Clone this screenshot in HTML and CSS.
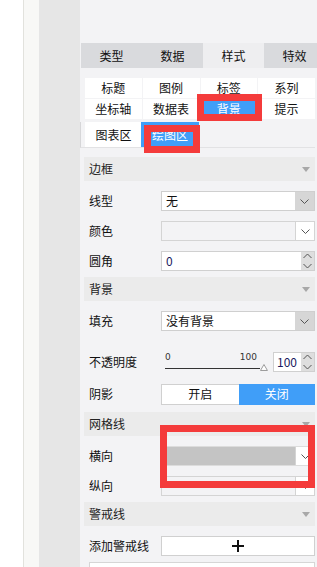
FILE: index.html
```html
<!DOCTYPE html>
<html>
<head>
<meta charset="utf-8">
<link rel="stylesheet" href="styles.css">
</head>
<body>
<div class="app">
  <div class="s-white"></div>
  <div class="s-line"></div>
  <div class="s-off"></div>
  <div class="s-gray"></div>
  <div class="panel">
    <div class="tabs">
      <div class="tab">类型</div>
      <div class="tab">数据</div>
      <div class="tab active">样式</div>
      <div class="tab">特效</div>
    </div>
    <div class="subtabs">
      <div class="st">标题</div>
      <div class="st">图例</div>
      <div class="st">标签</div>
      <div class="st">系列</div>
      <div class="st">坐标轴</div>
      <div class="st">数据表</div>
      <div class="st on">背景</div>
      <div class="st">提示</div>
    </div>
    <div class="subrow">
      <div class="st2">图表区</div>
      <div class="st2 on">绘图区</div>
    </div>

    <div class="sec-head first">边框<span class="tri"></span></div>
    <div class="sec-body">
      <div class="row">
        <div class="lbl">线型</div>
        <div class="sel">
          <div class="sel-text">无</div>
          <div class="sel-arrow"><svg width="9" height="5" viewBox="0 0 9 5"><polyline points="0.5,0.5 4.5,4.5 8.5,0.5" fill="none" stroke="#555" stroke-width="1"/></svg></div>
        </div>
      </div>
      <div class="row">
        <div class="lbl">颜色</div>
        <div class="sel empty">
          <div class="sel-text"></div>
          <div class="sel-arrow"><svg width="9" height="5" viewBox="0 0 9 5"><polyline points="0.5,0.5 4.5,4.5 8.5,0.5" fill="none" stroke="#555" stroke-width="1"/></svg></div>
        </div>
      </div>
      <div class="row">
        <div class="lbl">圆角</div>
        <div class="num wide">
          <div class="num-text">0</div>
          <div class="spin"><svg width="9" height="16" viewBox="0 0 9 16"><polyline points="0.5,5 4.5,1 8.5,5" fill="none" stroke="#555"/><polyline points="0.5,11 4.5,15 8.5,11" fill="none" stroke="#555"/></svg></div>
        </div>
      </div>
    </div>

    <div class="sec-head">背景<span class="tri"></span></div>
    <div class="sec-body">
      <div class="row">
        <div class="lbl">填充</div>
        <div class="sel">
          <div class="sel-text">没有背景</div>
          <div class="sel-arrow"><svg width="9" height="5" viewBox="0 0 9 5"><polyline points="0.5,0.5 4.5,4.5 8.5,0.5" fill="none" stroke="#555" stroke-width="1"/></svg></div>
        </div>
      </div>
      <div class="row opacity">
        <div class="lbl">不透明度</div>
        <div class="slider">
          <div class="ticks"><span>0</span><span>100</span></div>
          <div class="track-row">
            <div class="track"></div>
            <svg class="thumb" width="8" height="7" viewBox="0 0 8 7"><polygon points="4,0.5 7.5,6.5 0.5,6.5" fill="#fff" stroke="#999"/></svg>
          </div>
        </div>
        <div class="num small">
          <div class="num-text">100</div>
          <div class="spin"><svg width="9" height="16" viewBox="0 0 9 16"><polyline points="0.5,5 4.5,1 8.5,5" fill="none" stroke="#555"/><polyline points="0.5,11 4.5,15 8.5,11" fill="none" stroke="#555"/></svg></div>
        </div>
      </div>
      <div class="row shadow">
        <div class="lbl">阴影</div>
        <div class="toggle">
          <div class="t-on">开启</div>
          <div class="t-off">关闭</div>
        </div>
      </div>
    </div>

    <div class="sec-head grid-head">网格线<span class="tri"></span></div>
    <div class="sec-body">
      <div class="row">
        <div class="lbl">横向</div>
        <div class="sel grey">
          <div class="sel-text"></div>
          <div class="sel-arrow"><svg width="9" height="5" viewBox="0 0 9 5"><polyline points="0.5,0.5 4.5,4.5 8.5,0.5" fill="none" stroke="#555" stroke-width="1"/></svg></div>
        </div>
      </div>
      <div class="row">
        <div class="lbl">纵向</div>
        <div class="sel empty">
          <div class="sel-text"></div>
          <div class="sel-arrow"><svg width="9" height="5" viewBox="0 0 9 5"><polyline points="0.5,0.5 4.5,4.5 8.5,0.5" fill="none" stroke="#555" stroke-width="1"/></svg></div>
        </div>
      </div>
    </div>

    <div class="sec-head warn-head">警戒线<span class="tri"></span></div>
    <div class="sec-body">
      <div class="row">
        <div class="lbl">添加警戒线</div>
        <div class="add-btn"><svg width="12" height="12" viewBox="0 0 12 12"><path d="M6 0V12M0 6H12" stroke="#111" stroke-width="2"/></svg></div>
      </div>
      <div class="bottom-box"></div>
    </div>
  </div>

  <div class="mark m1"></div>
  <div class="mark m2"></div>
  <div class="mark m3"></div>
</div>
</body>
</html>
```

FILE: styles.css
```css
* { box-sizing: border-box; }
html, body { margin: 0; padding: 0; }
body {
  width: 317px;
  height: 567px;
  overflow: hidden;
  font-family: "Noto Sans CJK SC", "Noto Sans", sans-serif;
  font-size: 12px;
  color: #111;
}
.app {
  position: relative;
  display: flex;
  height: 567px;
  overflow: hidden;
}
.s-white { width: 23px; background: #fff; }
.s-line { width: 1px; background: #e2e2dd; }
.s-off { width: 15px; background: #f8f8f6; }
.s-gray { width: 41px; background: #e6e6e6; }
.panel {
  width: 237px;
  flex: none;
  background: #f3f3f5;
  padding-top: 43px;
}
.tabs {
  display: flex;
  height: 25px;
  padding-left: 1px;
}
.tab {
  width: 61px;
  flex: none;
  background: #d9dadd;
  display: flex;
  align-items: center;
  justify-content: center;
  line-height: 1;
}
.tab.active { background: #eeeef0; }

.subtabs {
  margin: 10px 0 0 5px;
  width: 230px;
  display: grid;
  grid-template-columns: repeat(4, 1fr);
  grid-auto-rows: 20px;
  gap: 1px;
}
.st {
  background: #fff;
  display: flex;
  align-items: center;
  justify-content: center;
  line-height: 1;
}
.st.on { background: #409ef8; color: #fff; }
.subrow {
  margin-top: 3px;
  height: 26px;
  display: flex;
  padding-left: 4px;
  border-left: 1px solid #d6d6d8;
  border-bottom: 1px solid #e2e2e4;
  width: 235px;
}
.st2 {
  width: 57px;
  background: #fff;
  display: flex;
  align-items: center;
  justify-content: center;
  line-height: 1;
}
.st2.on { width: 58px; margin-left: -1px; background: #409ef8; color: #fff; }

.sec-head {
  margin-left: 4px;
  width: 231px;
  height: 24px;
  background: #ebebeb;
  display: flex;
  align-items: center;
  justify-content: space-between;
  padding: 0 5px 0 5px;
  color: #222;
  line-height: 1;
}
.sec-head.first { margin-top: 9px; }
.tri {
  width: 0;
  height: 0;
  border-left: 4px solid transparent;
  border-right: 4px solid transparent;
  border-top: 5px solid #a8a8a8;
}
.sec-body { padding-top: 5px; padding-bottom: 1px; }
.row {
  height: 30px;
  display: flex;
  align-items: center;
  padding-left: 9px;
}
.lbl { width: 72px; flex: none; line-height: 1; }

.sel {
  width: 154px;
  height: 20px;
  border: 1px solid #cfcfcf;
  background: #fff;
  display: flex;
}
.sel-text { flex: 1; padding-left: 4px; line-height: 18px; }
.sel-arrow {
  width: 19px;
  background: #d6d6d6;
  display: flex;
  align-items: center;
  justify-content: center;
}
.sel.empty { background: transparent; border-color: #d4d4d4; }
.sel.empty .sel-arrow { background: #fff; border-left: 1px solid #d4d4d4; }
.sel.grey { background: #c4c4c4; border-color: #dcdcdc; }
.sel.grey .sel-arrow { background: #fff; border-left: 1px solid #d4d4d4; }

.num {
  height: 20px;
  display: flex;
  border: 1px solid #d0d0d0;
  background: #fff;
}
.num.wide { width: 154px; }
.num-text { flex: 1; padding-left: 4px; line-height: 18px; color: #1a1a60; }
.spin {
  width: 13px;
  background: #dedede;
  display: flex;
  align-items: center;
  justify-content: center;
}

.row.opacity { margin-top: 11px; }
.slider {
  width: 107px;
  flex: none;
  padding-left: 4px;
  margin-top: -1px;
}
.ticks {
  width: 92px;
  display: flex;
  justify-content: space-between;
  font-family: "DejaVu Sans", sans-serif;
  font-size: 9px;
  line-height: 9px;
  color: #333;
}
.track-row {
  display: flex;
  align-items: flex-end;
  height: 8px;
  margin-top: 1px;
}
.track { width: 96px; height: 1px; background: #333; margin-bottom: 2px; }
.thumb { display: block; }
.num.small { width: 42px; margin-left: 5px; }
.num.small .num-text { padding-left: 3px; }

.row.shadow { margin-top: 2px; }
.toggle {
  width: 154px;
  height: 21px;
  display: flex;
}
.t-on, .t-off {
  flex: 1;
  display: flex;
  align-items: center;
  justify-content: center;
  line-height: 1;
}
.t-on { background: #fff; border: 1px solid #d0d0d0; border-right: none; }
.t-off { background: #409ef8; color: #fff; }

.sec-head.grid-head { margin-top: 2px; }
.sec-head.warn-head { margin-top: 0; }

.add-btn {
  width: 154px;
  height: 20px;
  background: #fff;
  border: 1px solid #d0d0d0;
  display: flex;
  align-items: center;
  justify-content: center;
}
.bottom-box {
  margin: 1px 0 0 9px;
  width: 226px;
  height: 20px;
  background: #fff;
  border: 1px solid #d6d6d6;
}

.mark {
  position: absolute;
  border: 7px solid #f43b3b;
}
.m1 { left: 197px; top: 94px; width: 65px; height: 27px; }
.m2 { left: 144px; top: 125px; width: 56px; height: 28px; }
.m3 { left: 160px; top: 425px; width: 155px; height: 63px; }
```
